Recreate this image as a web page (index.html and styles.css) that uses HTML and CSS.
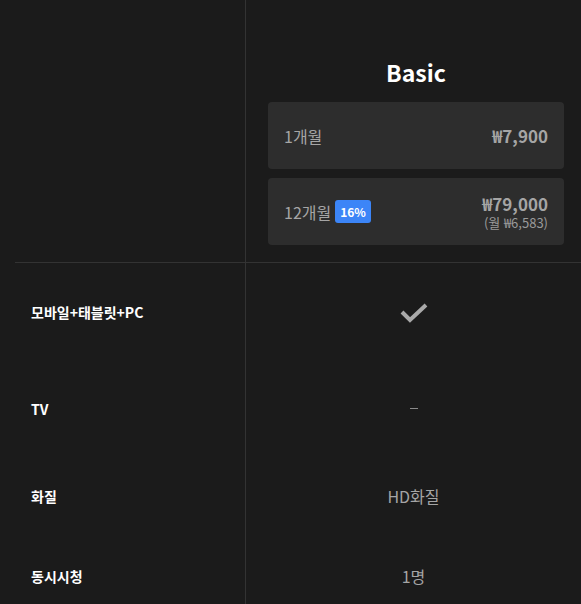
FILE: index.html
```html
<!DOCTYPE html>
<html lang="ko">
  <head>
    <meta charset="UTF-8" />
    <meta name="viewport" content="width=device-width, initial-scale=1.0" />
    <title>Basic</title>
    <link rel="stylesheet" href="styles.css">
  </head>
  <body>
    <main class="table">
      <div class="head">
        <div class="labelCol"></div>
        <div class="planCol">
          <h2 class="planName">Basic</h2>
          <div class="priceCard">
            <span class="term">1개월</span>
            <div class="price">
              <span class="amount">₩7,900</span>
            </div>
          </div>
          <div class="priceCard">
            <span class="term">12개월 <span class="badge">16%</span></span>
            <div class="price">
              <span class="amount">₩79,000</span>
              <span class="monthly">(월 ₩6,583)</span>
            </div>
          </div>
        </div>
      </div>
      <div class="row row-device">
        <div class="labelCol">모바일+태블릿+PC</div>
        <div class="planCol">
          <svg class="check" width="30" height="24" viewBox="0 0 30 24">
            <path d="M3 12 L11 20 L27 5" fill="none" stroke="#a9a9a9" stroke-width="4" />
          </svg>
        </div>
      </div>
      <div class="row row-tv">
        <div class="labelCol">TV</div>
        <div class="planCol"><span class="dash"></span></div>
      </div>
      <div class="row row-quality">
        <div class="labelCol">화질</div>
        <div class="planCol value">HD화질</div>
      </div>
      <div class="row row-screens">
        <div class="labelCol">동시시청</div>
        <div class="planCol value">1명</div>
      </div>
    </main>
  </body>
</html>
```

FILE: styles.css
```css
html,
body {
  margin: 0;
  background-color: #1b1b1b;
}
body {
  font-family: 'Noto Sans CJK KR', 'Noto Sans', sans-serif;
  color: #ffffff;
  height: 604px;
  overflow: hidden;
}
.table {
  display: flex;
  flex-direction: column;
}
.head,
.row {
  display: flex;
}
.labelCol {
  width: 246px;
  flex: 0 0 246px;
  border-right: 1px solid #333333;
  box-sizing: border-box;
}
.planCol {
  flex: 1 1 auto;
  display: flex;
  flex-direction: column;
  align-items: center;
  justify-content: center;
}
.head {
  border-bottom: 1px solid #333333;
  margin-left: 15px;
}
.head .labelCol {
  flex-basis: 231px;
  width: 231px;
}
.head .planCol {
  padding: 55px 17px 17px 22px;
  gap: 9px;
  align-items: stretch;
}
.planName {
  margin: 0 0 4px;
  font-size: 23px;
  line-height: 34px;
  font-weight: 700;
  text-align: center;
}
.priceCard {
  display: flex;
  align-items: center;
  justify-content: space-between;
  height: 67px;
  padding: 0 16px;
  background-color: #2d2d2d;
  border-radius: 4px;
}
.term {
  display: flex;
  align-items: center;
  gap: 4px;
  font-size: 16px;
  color: #a5a5a5;
}
.badge {
  background-color: #3c85f7;
  color: #ffffff;
  font-size: 12px;
  font-weight: 700;
  padding: 1px 5px;
  line-height: 21px;
  border-radius: 3px;
}
.price {
  display: flex;
  flex-direction: column;
  align-items: flex-end;
}
.amount {
  font-size: 17px;
  font-weight: 700;
  color: #a5a5a5;
  line-height: 22px;
}
.monthly {
  font-size: 13px;
  color: #9a9a9a;
  line-height: 16px;
}
.row .labelCol {
  display: flex;
  align-items: center;
  padding-left: 31px;
  font-size: 14px;
  font-weight: 700;
}
.row-device {
  height: 97px;
}
.row-tv {
  height: 97px;
}
.row-quality {
  height: 77px;
}
.row-screens {
  height: 84px;
}
.dash {
  display: block;
  width: 8px;
  height: 1px;
  background-color: #8a8a8a;
}
.value {
  font-size: 16px;
  color: #a5a5a5;
}
```
